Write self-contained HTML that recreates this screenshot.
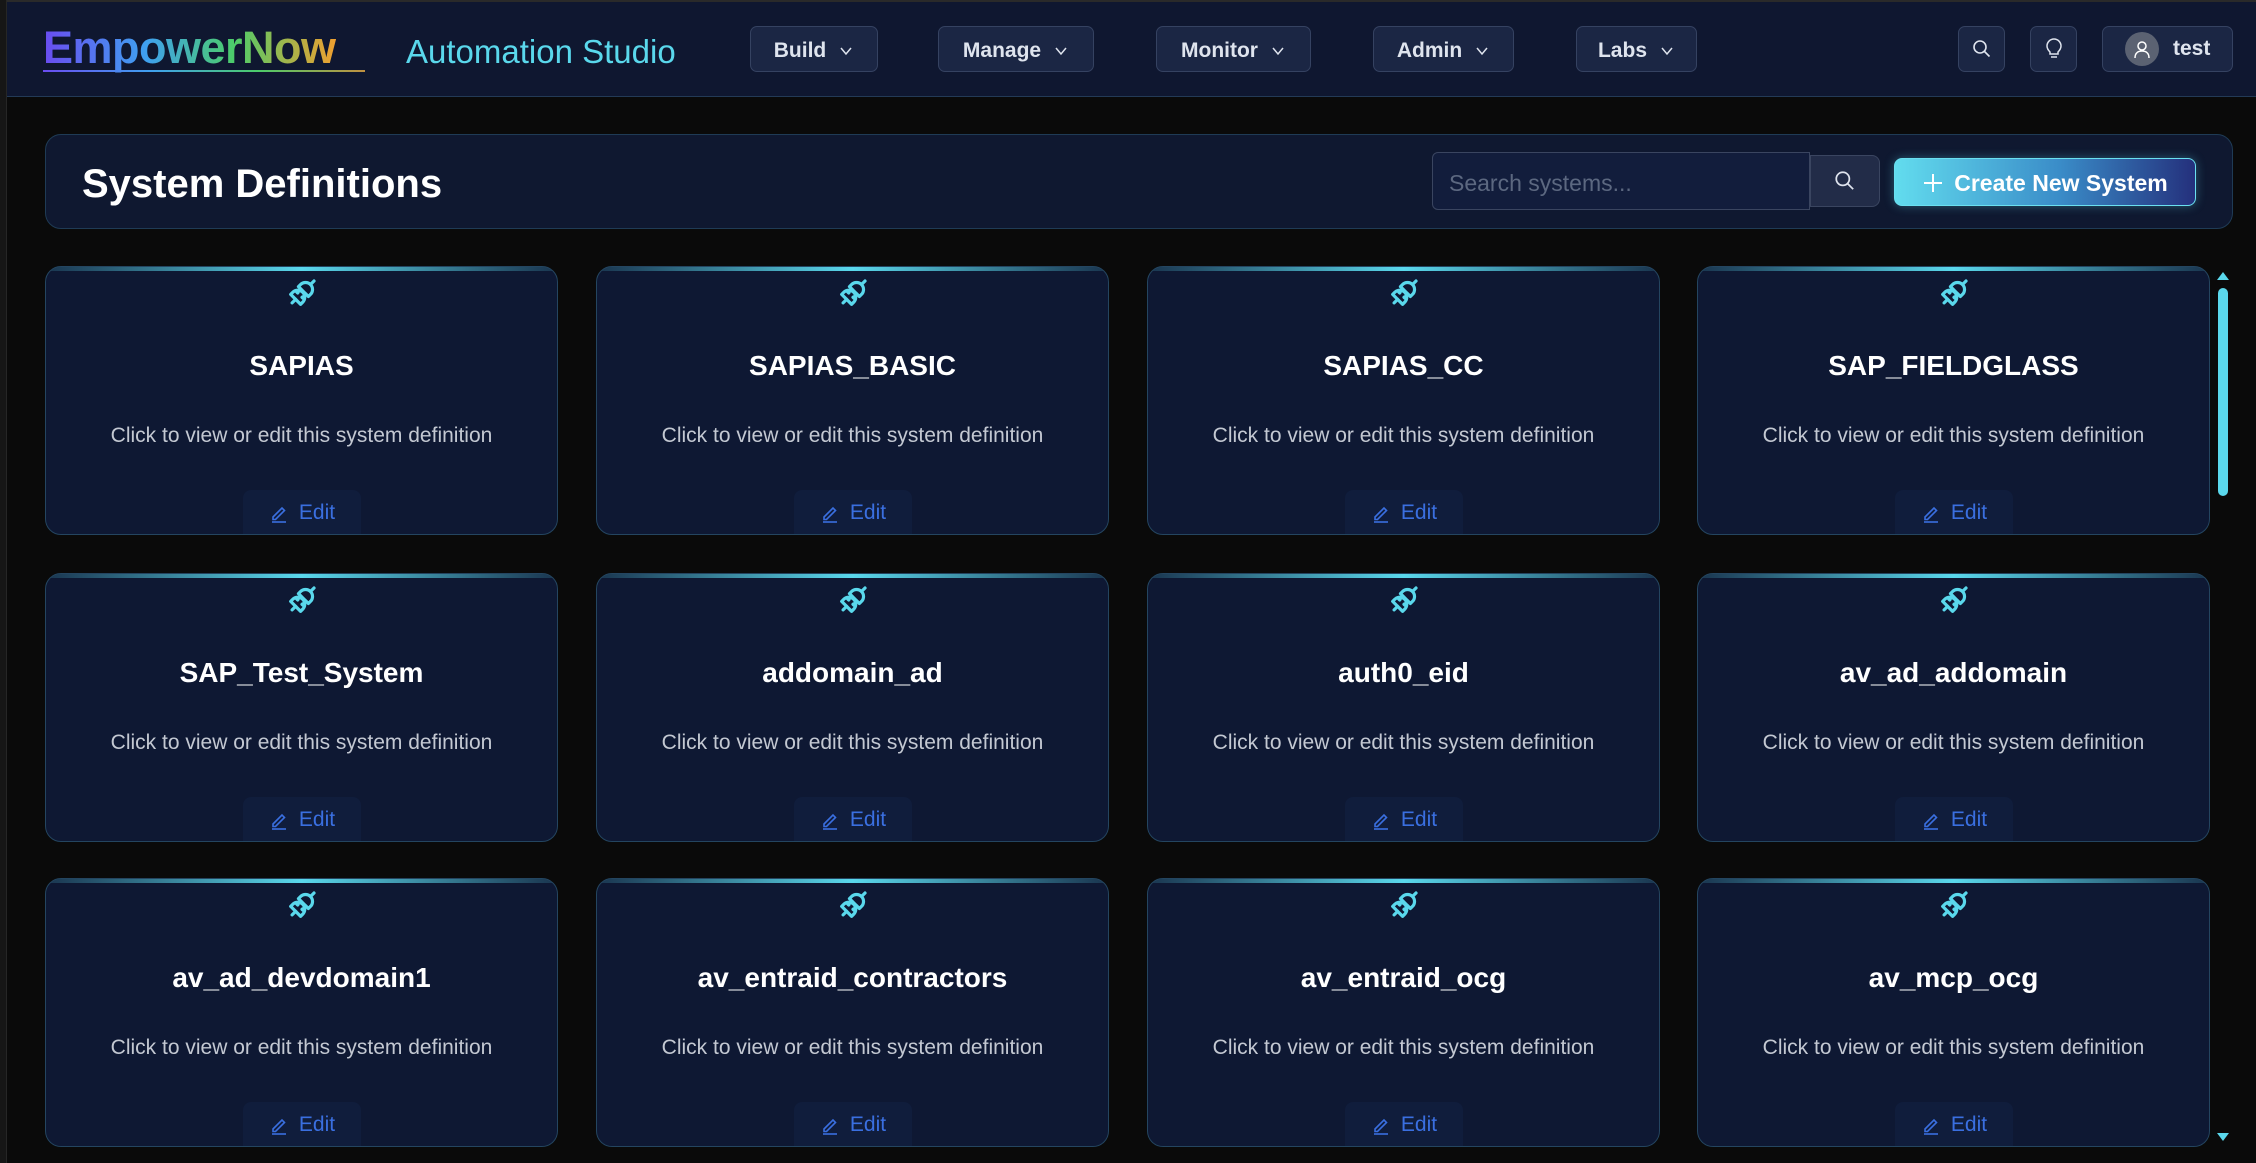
<!DOCTYPE html>
<html><head><meta charset="utf-8"><style>
*{box-sizing:border-box;margin:0;padding:0}
body{width:2256px;height:1163px;background:#0a0a0a;font-family:"Liberation Sans",sans-serif;overflow:hidden;position:relative;color:#fff}
.lb{position:absolute;left:0;top:0;width:7px;height:1163px;background:#161616;border-right:1px solid #262626}
.hdr{position:absolute;left:7px;top:0;right:0;height:97px;background:#0f1730;border-top:2px solid #2a2a2a;border-bottom:1px solid #233a56}
.logo{position:absolute;left:43px;top:22px;font-size:45px;font-weight:bold;letter-spacing:-0.5px;background:linear-gradient(90deg,#6a4cf0,#3fa0f0 35%,#4ccc6a 65%,#f0a030);-webkit-background-clip:text;color:transparent}
.uline{position:absolute;left:43px;top:70px;width:322px;height:2px;background:linear-gradient(90deg,#6a4cf0,#3fa0f0,#4ccc6a,#c09040)}
.as{position:absolute;left:406px;top:33px;font-size:33px;color:#5ad8ec}
.nb{position:absolute;top:26px;height:46px;background:#1b2644;border:1px solid #354261;border-radius:7px;color:#dfe4ee;font-size:21px;font-weight:bold;display:flex;align-items:center;justify-content:center;gap:12px;padding-top:3px}
.nb svg{width:16px;height:16px}
.ib{position:absolute;top:26px;height:46px;background:#1b2644;border:1px solid #354261;border-radius:7px;display:flex;align-items:center;justify-content:center}
.panel{position:absolute;left:45px;top:134px;width:2188px;height:95px;background:#0f1830;border:1px solid #1f3b55;border-radius:16px}
.panel h1{position:absolute;left:36px;top:27px;font-size:40px;font-weight:bold;color:#fff}
.srch{position:absolute;left:1432px;top:152px;width:378px;height:58px;background:#121d3c;border:1px solid #3a4560;border-radius:6px 0 0 6px;color:#5c6880;font-size:23px;padding:17px 16px}
.sbtn{position:absolute;left:1810px;top:155px;width:70px;height:52px;background:#222c48;border:1px solid #3a4560;border-radius:0 8px 8px 0;display:flex;align-items:center;justify-content:center}
.cbtn{position:absolute;left:1894px;top:158px;width:302px;height:48px;border-radius:8px;border:1px solid #6ae0f0;background:linear-gradient(90deg,#62dcee,#3a8cc8 55%,#24307c);box-shadow:0 0 10px rgba(90,216,236,.35);color:#fff;font-size:23px;font-weight:bold;display:flex;align-items:center;justify-content:center;gap:10px;padding-top:2px}
.card{position:absolute;width:513px;height:269px;background:#0e1833;border:1px solid #244560;border-radius:16px;overflow:hidden;text-align:center}
.card:before{content:"";position:absolute;left:0;right:0;top:0;height:4px;background:linear-gradient(90deg,rgba(90,216,236,.15),#5ad8ec 50%,rgba(90,216,236,.15))}
.card svg.pl{position:absolute;left:236px;top:2px}
.card .t{position:absolute;left:0;right:0;top:83px;font-size:28px;font-weight:bold;color:#fff}
.card .d{position:absolute;left:0;right:0;top:157px;font-size:21px;color:#c3c8d2}
.card .e{position:absolute;left:197px;top:223px;width:118px;height:46px;background:#101d3c;border-radius:8px 8px 0 0;color:#3a6fe0;font-size:21px;display:flex;align-items:center;justify-content:center;gap:10px}
.sb{position:absolute;left:2213px;top:266px;width:20px;height:881px}
</style></head><body>
<div class="lb"></div>
<div class="hdr"></div>
<div class="logo">EmpowerNow</div>
<div class="uline"></div>
<div class="as">Automation Studio</div>

<div class="nb" style="left:750px;width:128px">Build <svg viewBox="0 0 16 16"><path d="M3 5l5 6 5-6" fill="none" stroke="#dfe4ee" stroke-width="1.5"/></svg></div>
<div class="nb" style="left:938px;width:156px">Manage <svg viewBox="0 0 16 16"><path d="M3 5l5 6 5-6" fill="none" stroke="#dfe4ee" stroke-width="1.5"/></svg></div>
<div class="nb" style="left:1156px;width:155px">Monitor <svg viewBox="0 0 16 16"><path d="M3 5l5 6 5-6" fill="none" stroke="#dfe4ee" stroke-width="1.5"/></svg></div>
<div class="nb" style="left:1373px;width:141px">Admin <svg viewBox="0 0 16 16"><path d="M3 5l5 6 5-6" fill="none" stroke="#dfe4ee" stroke-width="1.5"/></svg></div>
<div class="nb" style="left:1576px;width:121px">Labs <svg viewBox="0 0 16 16"><path d="M3 5l5 6 5-6" fill="none" stroke="#dfe4ee" stroke-width="1.5"/></svg></div>

<div class="ib" style="left:1958px;width:47px"><svg width="22" height="22" viewBox="0 0 22 22"><circle cx="9" cy="9" r="6" fill="none" stroke="#dfe4ee" stroke-width="1.6"/><path d="M13.5 13.5l5 5" stroke="#dfe4ee" stroke-width="1.6"/></svg></div>
<div class="ib" style="left:2030px;width:47px"><svg width="22" height="24" viewBox="0 0 22 24"><path d="M7 15c-2-2-3-3.5-3-6a7 7 0 0114 0c0 2.5-1 4-3 6v2H7z" fill="none" stroke="#dfe4ee" stroke-width="1.5"/><path d="M8 20h6" stroke="#dfe4ee" stroke-width="1.5"/></svg></div>
<div class="ib" style="left:2102px;width:131px;gap:14px;justify-content:flex-start;padding-left:22px"><div style="width:34px;height:34px;border-radius:50%;background:#5b6272;display:flex;align-items:center;justify-content:center"><svg width="20" height="20" viewBox="0 0 20 20"><circle cx="10" cy="7" r="4" fill="none" stroke="#fff" stroke-width="1.5"/><path d="M3 19c0-5 3-7 7-7s7 2 7 7" fill="none" stroke="#fff" stroke-width="1.5"/></svg></div><span style="font-size:21px;font-weight:bold;color:#dfe4ee">test</span></div>

<div class="panel"><h1>System Definitions</h1></div>
<div class="srch">Search systems...</div>
<div class="sbtn"><svg width="24" height="24" viewBox="0 0 22 22"><circle cx="9" cy="9" r="6" fill="none" stroke="#dfe4ee" stroke-width="1.6"/><path d="M13.5 13.5l5 5" stroke="#dfe4ee" stroke-width="1.6"/></svg></div>
<div class="cbtn"><svg width="22" height="22" viewBox="0 0 22 22"><path d="M11 2v18M2 11h18" stroke="#fff" stroke-width="2"/></svg>Create New System</div>

<div id="cards"></div>
<div class="sb">
<svg width="20" height="881"><path d="M4 14l6-8 6 8z" fill="#5ad8ec"/><rect x="5" y="22" width="10" height="208" rx="5" fill="#5ad8ec"/><path d="M4 867l6 8 6-8z" fill="#5ad8ec"/></svg>
</div>

<script>
var names=["SAPIAS","SAPIAS_BASIC","SAPIAS_CC","SAP_FIELDGLASS","SAP_Test_System","addomain_ad","auth0_eid","av_ad_addomain","av_ad_devdomain1","av_entraid_contractors","av_entraid_ocg","av_mcp_ocg"];
var xs=[45,596,1147,1697],ys=[266,573,878];
var plug='<svg class="pl" width="40" height="46" viewBox="0 0 40 46"><g fill="none" stroke="#5ad8ec" stroke-width="3.2" stroke-linecap="round" stroke-linejoin="round" transform="rotate(-45 20 24)"><path d="M6 24h5"/><path d="M11 17v14h3a7 7 0 000-14z"/><path d="M17 21v-2M17 29v-2"/><path d="M22 17v14h3a7 7 0 007-7 7 7 0 00-7-7z"/><path d="M32 24h5"/><path d="M17 20.5h5M17 27.5h5"/></g></svg>';
var h='';
for(var i=0;i<12;i++){var x=xs[i%4],y=ys[Math.floor(i/4)];
h+='<div class="card" style="left:'+x+'px;top:'+y+'px">'+plug+'<div class="t">'+names[i]+'</div><div class="d">Click to view or edit this system definition</div><div class="e"><svg width="20" height="20" viewBox="0 0 20 20"><path d="M4 14l9-9 2.5 2.5-9 9H4z" fill="none" stroke="#3a6fe0" stroke-width="1.6"/><path d="M3 19h14" stroke="#3a6fe0" stroke-width="1.6"/></svg>Edit</div></div>';}
document.getElementById('cards').innerHTML=h;
</script>
</body></html>
